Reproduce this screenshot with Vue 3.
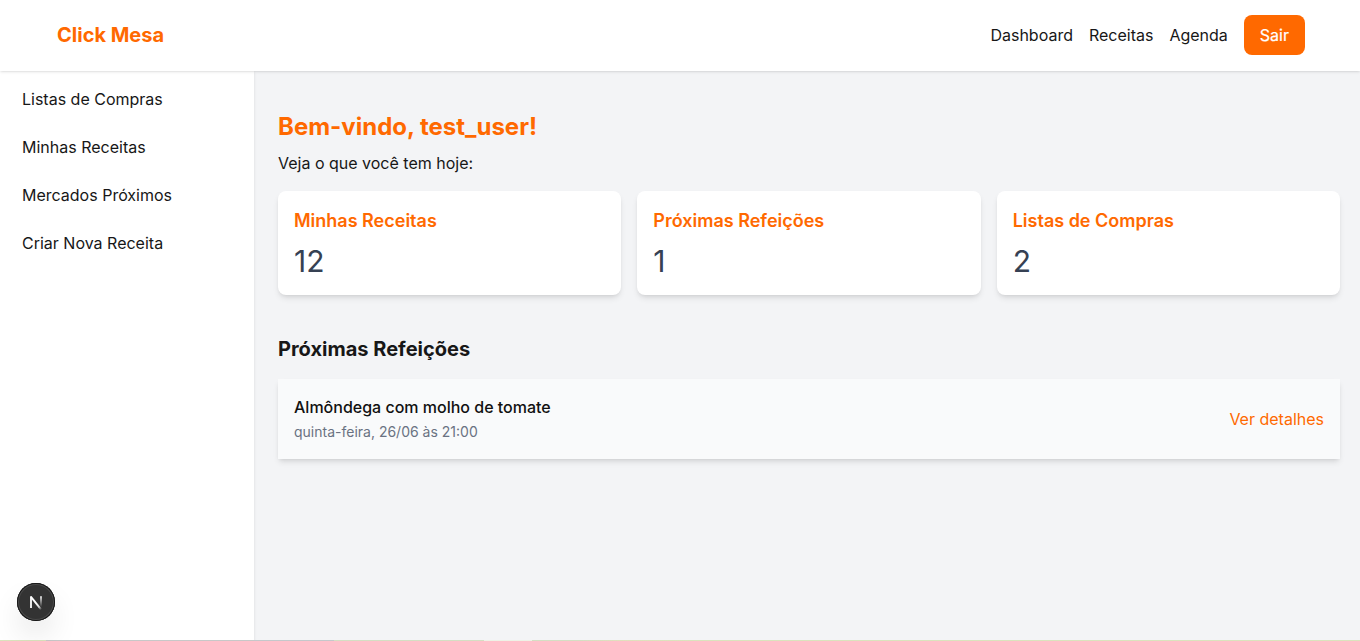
<script setup>
const navLinks = ['Dashboard', 'Receitas', 'Agenda']
const menu = ['Listas de Compras', 'Minhas Receitas', 'Mercados Próximos', 'Criar Nova Receita']
const cards = [
  { title: 'Minhas Receitas', value: 12 },
  { title: 'Próximas Refeições', value: 1 },
  { title: 'Listas de Compras', value: 2 },
]
const meals = [{ name: 'Almôndega com molho de tomate', date: 'quinta-feira, 26/06 às 21:00' }]
</script>

<template>
  <div class="page">
    <header class="header">
      <a class="brand">Click Mesa</a>
      <nav class="nav">
        <a v-for="link in navLinks" :key="link">{{ link }}</a>
        <button class="logout" type="button">Sair</button>
      </nav>
    </header>
    <div class="body">
      <aside class="sidebar">
        <a v-for="item in menu" :key="item">{{ item }}</a>
      </aside>
      <main class="main">
        <h1>Bem-vindo, test_user!</h1>
        <p class="intro">Veja o que você tem hoje:</p>
        <section class="cards">
          <article v-for="card in cards" :key="card.title" class="card">
            <h2>{{ card.title }}</h2>
            <p>{{ card.value }}</p>
          </article>
        </section>
        <h2 class="subtitle">Próximas Refeições</h2>
        <ul class="meals">
          <li v-for="meal in meals" :key="meal.name" class="meal">
            <div>
              <p class="meal-name">{{ meal.name }}</p>
              <p class="meal-date">{{ meal.date }}</p>
            </div>
            <a class="details">Ver detalhes</a>
          </li>
        </ul>
      </main>
    </div>
    <div class="edge"></div>
    <div class="dev-badge">
      <svg width="40" height="40" viewBox="0 0 40 40" fill="none">
        <defs>
          <linearGradient id="diag" x1="21" y1="20.5" x2="26" y2="27" gradientUnits="userSpaceOnUse">
            <stop stop-color="#fff" />
            <stop offset="0.6" stop-color="#fff" stop-opacity="0.8" />
            <stop offset="1" stop-color="#fff" stop-opacity="0" />
          </linearGradient>
          <linearGradient id="stem" x1="25" y1="14" x2="25" y2="25" gradientUnits="userSpaceOnUse">
            <stop stop-color="#fff" />
            <stop offset="1" stop-color="#fff" stop-opacity="0" />
          </linearGradient>
        </defs>
        <path d="M15 14.8L25.4 27.8" stroke="url(#diag)" stroke-width="1.9" />
        <path d="M15 26V14.2" stroke="#fff" stroke-width="1.8" />
        <path d="M25 14.2V26" stroke="url(#stem)" stroke-width="1.7" />
      </svg>
    </div>
  </div>
</template>

<style>
body {
  margin: 0;
  overflow: hidden;
}
</style>

<style scoped>
.page {
  position: relative;
  display: flex;
  flex-direction: column;
  height: 641px;
  overflow: hidden;
  background: #f3f4f6;
  color: #171717;
  font: 16px/24px Inter, "Liberation Sans", sans-serif;
}
h1, h2, p, ul {
  margin: 0;
  padding: 0;
}
.header {
  position: relative;
  z-index: 2;
  flex: none;
  box-sizing: border-box;
  height: 71px;
  display: flex;
  align-items: center;
  justify-content: space-between;
  padding: 0 55px 1px 57px;
  background: #fff;
  box-shadow: 0 1px 3px rgba(0, 0, 0, 0.1), 0 1px 2px -1px rgba(0, 0, 0, 0.1);
}
.brand {
  color: #ff6900;
  font-size: 20px;
  line-height: 28px;
  font-weight: 700;
}
.nav {
  display: flex;
  align-items: center;
  gap: 16px;
}
.logout {
  height: 40px;
  padding: 0 16px;
  border: 0;
  border-radius: 8px;
  background: #ff6900;
  color: #fff;
  font: 400 16px/24px Inter, "Liberation Sans", sans-serif;
  -webkit-text-stroke: 0.2px #fff;
}
.body {
  flex: 1;
  display: flex;
  min-height: 0;
}
.sidebar {
  position: relative;
  z-index: 1;
  flex: none;
  box-sizing: border-box;
  width: 254px;
  padding: 16px 22px;
  display: flex;
  flex-direction: column;
  gap: 24px;
  background: #fff;
  box-shadow: 0 1px 3px rgba(0, 0, 0, 0.1), 0 1px 2px -1px rgba(0, 0, 0, 0.1);
}
.main {
  flex: 1;
  padding: 40px 20px 24px 24px;
}
h1 {
  color: #ff6900;
  font-size: 24px;
  line-height: 32px;
  font-weight: 700;
}
.intro {
  margin: 8px 0 16px;
}
.cards {
  display: grid;
  grid-template-columns: repeat(3, 1fr);
  gap: 16px;
}
.card {
  padding: 16px;
  border-radius: 8px;
  background: #fff;
  box-shadow: 0 4px 6px -1px rgba(0, 0, 0, 0.1), 0 2px 4px -2px rgba(0, 0, 0, 0.1);
}
.card h2 {
  color: #ff6900;
  font-size: 18px;
  line-height: 28px;
  font-weight: 600;
}
.card p {
  margin-top: 8px;
  color: #364153;
  font-size: 30px;
  line-height: 36px;
}
.subtitle {
  margin: 40px 0 16px;
  font-size: 20px;
  line-height: 28px;
  font-weight: 700;
}
.meals {
  list-style: none;
}
.meal {
  box-sizing: border-box;
  height: 80px;
  display: flex;
  align-items: center;
  justify-content: space-between;
  padding: 16px;
  background: #f9fafb;
  box-shadow: 0 4px 6px -1px rgba(0, 0, 0, 0.1), 0 2px 4px -2px rgba(0, 0, 0, 0.1);
}
.meal-name {
  color: #111;
  font-weight: 500;
}
.meal-date {
  margin: 3px 0 1px;
  color: #6a7282;
  font-size: 14px;
  line-height: 20px;
}
.details {
  color: #ff6900;
}
.edge {
  position: absolute;
  z-index: 3;
  left: 0;
  right: 0;
  bottom: 0;
  height: 1px;
  background: linear-gradient(90deg, #dbe3bd 46px, #c8c8c8 46px 254px, #c5c8cb 254px 334px, #d5dec3 334px 484px, #eef2e6 484px 532px, #d5dec3 532px 580px, #e2dfbd 620px, #dbe3bd 690px);
}
.dev-badge {
  position: absolute;
  z-index: 4;
  left: 17px;
  bottom: 20px;
  box-sizing: border-box;
  width: 38px;
  height: 38px;
  display: flex;
  align-items: center;
  justify-content: center;
  border-radius: 50%;
  background: #333;
  box-shadow: inset 0 0 0 1px #171717, inset 0 0 0 2px #4b4b4b, 0 16px 32px -8px rgba(0, 0, 0, 0.24);
}
.dev-badge svg {
  flex: none;
}
</style>
